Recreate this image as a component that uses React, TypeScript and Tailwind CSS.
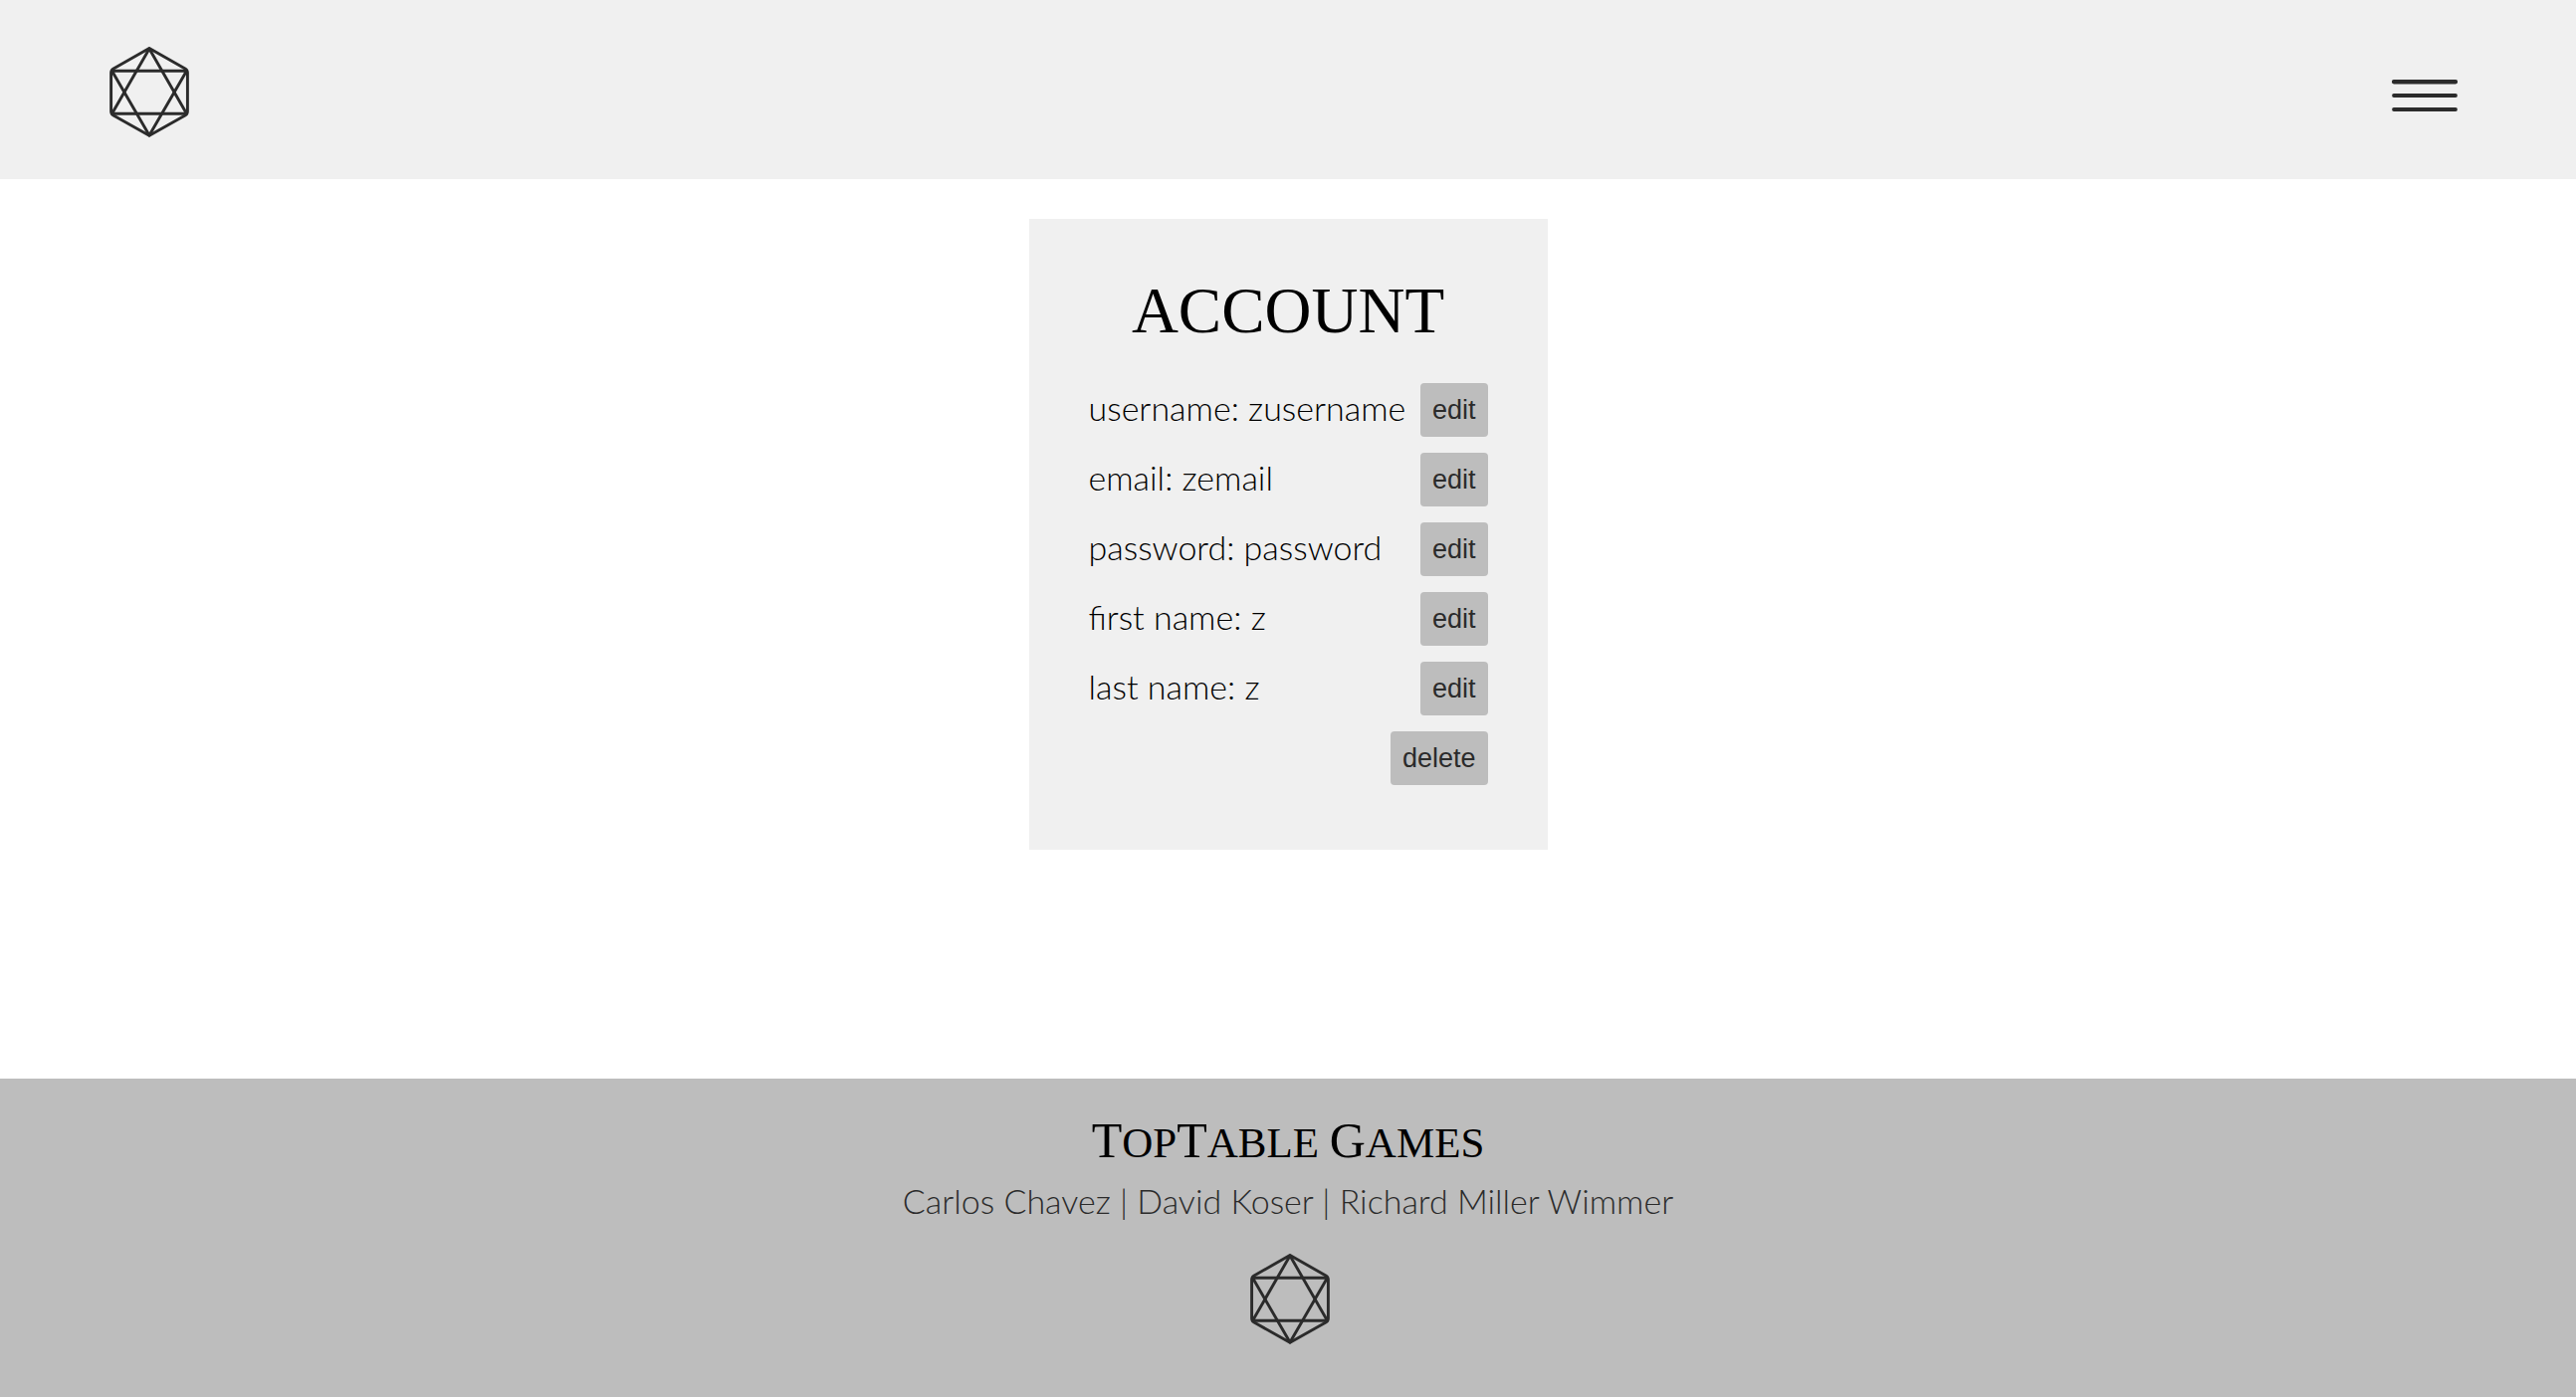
import React from "react";

const fields = [
  { label: "username", value: "zusername" },
  { label: "email", value: "zemail" },
  { label: "password", value: "password" },
  { label: "first name", value: "z" },
  { label: "last name", value: "z" },
];

function DieLogo() {
  return (
    <svg
      viewBox="0 0 80 92"
      className="block h-[92px] w-20"
      fill="none"
      stroke="#2b2b2b"
      strokeWidth="2.9"
      strokeLinejoin="round"
      aria-hidden="true"
    >
      <path d="M40 2.5 L76 23 Q78.4 24.5 78.4 27 V66 Q78.4 68.5 76 70 L40 90.3 L4 70 Q1.6 68.5 1.6 66 V27 Q1.6 24.5 4 23 Z" />
      <path d="M40 3 L77.5 68.3 H2.5 Z" />
      <path d="M40 90 L2.5 25.2 H77.5 Z" />
    </svg>
  );
}

function MenuIcon() {
  return (
    <svg
      viewBox="0 0 66 34"
      className="block h-[34px] w-[66px]"
      stroke="#2b2b2b"
      strokeLinecap="round"
      aria-hidden="true"
    >
      <path d="M2.2 3.2 H63.8" strokeWidth="4.6" />
      <path d="M2 17 H64" strokeWidth="3.8" />
      <path d="M2 31 H64" strokeWidth="3.8" />
    </svg>
  );
}

function ActionButton({ children, label }: { children: React.ReactNode; label: string }) {
  return (
    <button
      type="button"
      aria-label={label}
      className="h-[54px] shrink-0 rounded bg-[#bdbdbd] px-3 font-['Liberation_Sans',sans-serif] text-[27px] leading-8 text-[#2b2b2b]"
    >
      {children}
    </button>
  );
}

export default function App() {
  return (
    <div className="flex min-h-screen flex-col bg-white font-['Lato',sans-serif] text-black">
      <header className="flex h-[180px] items-center justify-between bg-[#f0f0f0] pl-[110px] pr-[119px] pt-1">
        <a href="#home" aria-label="Home">
          <DieLogo />
        </a>
        <button type="button" aria-label="Menu" className="pt-2">
          <MenuIcon />
        </button>
      </header>

      <main className="flex flex-1 flex-col items-center pt-10">
        <section className="w-[521px] bg-[#f0f0f0] px-[60px] pb-[65px] pt-14">
          <h1 className="text-center font-['Liberation_Serif',serif] text-[65px] leading-[72px] uppercase">
            Account
          </h1>
          <div className="mt-[37px] flex flex-col gap-4">
            {fields.map((field) => (
              <div key={field.label} className="flex items-center justify-between">
                <p className="whitespace-nowrap pb-1 text-[34px] font-light leading-10">
                  {field.label}: {field.value}
                </p>
                <ActionButton label={"edit " + field.label}>edit</ActionButton>
              </div>
            ))}
            <div className="flex justify-end">
              <ActionButton label="delete account">delete</ActionButton>
            </div>
          </div>
        </section>
      </main>

      <footer className="flex h-80 flex-col items-center bg-[#bdbdbd] pt-8">
        <h2 className="font-['Liberation_Serif',serif] text-[43px] leading-[60px] uppercase">
          <span className="text-[50px]">T</span>op<span className="text-[50px]">T</span>able{" "}
          <span className="text-[50px]">G</span>ames
        </h2>
        <p className="mt-2 text-[34px] font-light leading-10 text-[#2b2b2b]">
          Carlos Chavez | David Koser | Richard Miller Wimmer
        </p>
        <div className="mt-8 pl-1">
          <DieLogo />
        </div>
      </footer>
    </div>
  );
}
